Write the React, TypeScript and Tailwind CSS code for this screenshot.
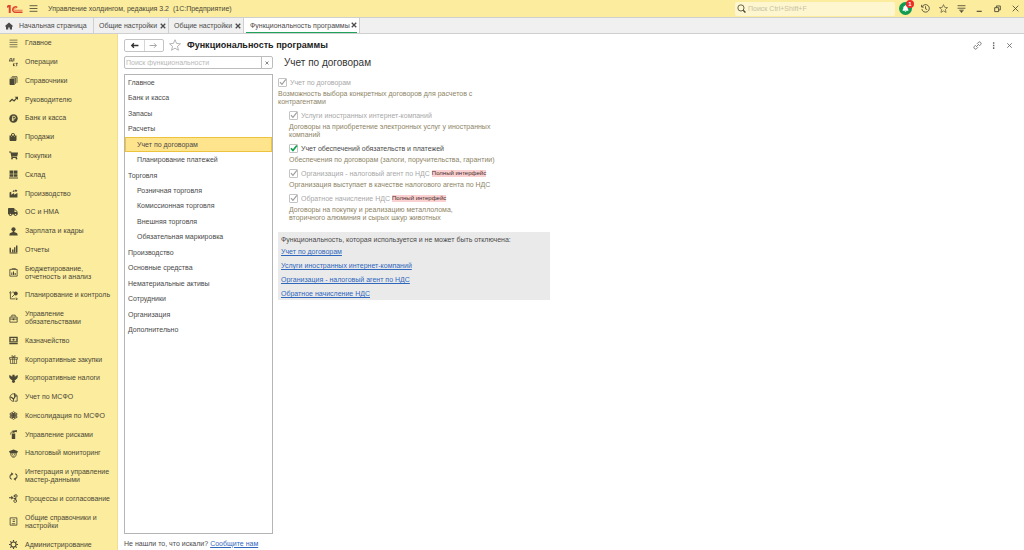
import type { ReactNode } from "react";
import clsx from "clsx";
import { FaBell, FaShoppingBag, FaShoppingCart, FaTruck } from "react-icons/fa";

function Svg({ children, className = "size-[9px]" }: { children: ReactNode; className?: string }) {
  return (
    <svg viewBox="0 0 16 16" fill="none" stroke="currentColor" strokeWidth="1.5" className={clsx("shrink-0", className)} aria-hidden="true">
      {children}
    </svg>
  );
}

const solid = { fill: "currentColor", stroke: "none" };

const sections: { label: string; icon: ReactNode }[] = [
  { label: "Главное", icon: <Svg><path d="M1 2h14M1 6h14M1 10h14M1 14h14" strokeWidth="1.2" /></Svg> },
  {
    label: "Операции",
    icon: (
      <Svg>
        <path d="M0 6.500V5h1l1-4h3v4h1v1.500M1 5h5M7 1.500h3M8.500 1.500V6M8 9.500v5M8 12l2.500-2.500M8 12l2.500 2.500M12 9.500h3.500M13.700 9.500v5" strokeWidth="1.5" />
      </Svg>
    ),
  },
  {
    label: "Справочники",
    icon: (
      <Svg>
        <path {...solid} d="M1 5h9v11H2l-1-1z" />
        <path d="M3 3.500h8.700V14M5 1.300h9.200V12" strokeWidth="1.500" />
      </Svg>
    ),
  },
  { label: "Руководителю", icon: <Svg><path d="M1 12l4.500-4.500 3.500 3L14 5" strokeWidth="2.200" /><path {...solid} d="M10 3h6v6z" /></Svg> },
  {
    label: "Банк и касса",
    icon: (
      <Svg>
        <circle cx="8" cy="8" r="7.500" {...solid} />
        <path d="M6.500 12.500V4h2.500a2.300 2.300 0 010 4.800H5M5 10.800h4" stroke="#fbec9e" />
      </Svg>
    ),
  },
  { label: "Продажи", icon: <FaShoppingBag className="size-2 shrink-0" /> },
  { label: "Покупки", icon: <FaShoppingCart className="size-[9px] shrink-0" /> },
  { label: "Склад", icon: <Svg><path {...solid} d="M1 1h6.500v5.500H1zM8.500 1H15v5.500H8.500zM1 7.500h6.500V12H1zM8.500 7.500H15V12H8.500zM0 13.200h16v1.800H0z" /></Svg> },
  {
    label: "Производство",
    icon: <Svg><path {...solid} d="M1 15V6l3-1v5l5-3v3l6-3v8z" /><path {...solid} d="M6 4l2-2 2 1 2-2 3 2-2 2-3-1-2 1.500z" /></Svg>,
  },
  { label: "ОС и НМА", icon: <FaTruck className="size-[10px] shrink-0" /> },
  { label: "Зарплата и кадры", icon: <Svg><circle cx="8" cy="4" r="3.700" {...solid} /><path {...solid} d="M6.500 6h3v3l5 2 1 4H.5l1-4 5-2z" /></Svg> },
  { label: "Отчеты", icon: <Svg><path {...solid} d="M1 5h2.500v8H1zM5.500 8H8v5H5.500zM9 4h2.300v9H9zM12.500 1H15v12h-2.500zM1 13.500h14V15H1z" /></Svg> },
  {
    label: "Бюджетирование,\nотчетность и анализ",
    icon: <Svg><path d="M1.500 2.500h13v12h-13zM5 .5h6v2" /><path d="M5 8v4.500M8 6v6.500M11 9v3.500" strokeWidth="1.800" /></Svg>,
  },
  {
    label: "Планирование и контроль",
    icon: <Svg><path d="M2.500 3v11h9M1 4l1.500-3L4 4M12 12l3 2-3 2M5 11l5-5M6 2h3" /><circle cx="12" cy="4.500" r="3.500" {...solid} /></Svg>,
  },
  { label: "Управление\nобязательствами", icon: <Svg><path d="M1.500 5.500h13v9h-13zM5 5V2h6v3M1.500 9h13" /><path {...solid} d="M6.500 8h3v3h-3z" /></Svg> },
  {
    label: "Казначейство",
    icon: <Svg><path d="M1.500 2.500h13v8h-13zM.5 13.500h15" strokeWidth="2" /><circle cx="8" cy="6.500" r="2" {...solid} /><path d="M3 4.500v4M13 4.500v4" /></Svg>,
  },
  {
    label: "Корпоративные закупки",
    icon: <Svg><path d="M1 4.500h14v3H1zM2.500 7.500v8h11v-8M6.500 4.500v11M9.500 4.500v11M8 4C5 4 4 1 5.500 1S8 4 8 4s1-3 2.500-3S11 4 8 4" strokeWidth="1.300" /></Svg>,
  },
  {
    label: "Корпоративные налоги",
    icon: <Svg><path {...solid} d="M0 2l4 1 1 2 1-1V1.500h4V4l1 1 1-2 4-1-1 5-3 3-2 1 1 3-3 2-3-2 1-3-2-1-3-3z" /></Svg>,
  },
  {
    label: "Учет по МСФО",
    icon: <Svg><path d="M6 2A6.500 6.500 0 005 14l3 1V9M6 1.500h5l3.500 3.500v9.500H10" /><path d="M2 7l3 1 3 3 3-5M10 1v4h4" strokeWidth="2" /></Svg>,
  },
  {
    label: "Консолидация по МСФО",
    icon: (
      <Svg>
        <circle cx="8" cy="8" r="2.500" {...solid} />
        <ellipse cx="8" cy="8" rx="3" ry="7" />
        <ellipse cx="8" cy="8" rx="3" ry="7" transform="rotate(60 8 8)" />
        <ellipse cx="8" cy="8" rx="3" ry="7" transform="rotate(120 8 8)" />
      </Svg>
    ),
  },
  { label: "Управление рисками", icon: <Svg><path {...solid} d="M5 6h6v10H5zM6 1h4v4H6zM9 1l5-1v4L9 3z" /><path d="M6 3C4 3 3 5 3 8" strokeWidth="1.600" /></Svg> },
  {
    label: "Налоговый мониторинг",
    icon: <Svg><path {...solid} d="M0 4l8-3 8 3-2 4H2z" /><path d="M3 8c0 9 10 9 10 0M5 9.500h2M9 9.500h2M6 12.500h4" /></Svg>,
  },
  {
    label: "Интеграция и управление\nмастер-данными",
    icon: <Svg><path d="M5 3.500C0 6 1 12 5 13M11 12.500c5-2.500 4-8.500 0-9.500" strokeWidth="1.800" /><path {...solid} d="M4 .5l4 3-4 3zM12 9.500v6l-4-3z" /></Svg>,
  },
  {
    label: "Процессы и согласование",
    icon: <Svg><path d="M0 6.500h5M8 3.500h5M8 8h4v3" strokeWidth="1.800" /><path {...solid} d="M4 3l4 3.500L4 10z" /><circle cx="12" cy="3.500" r="2.500" /><circle cx="11" cy="12.500" r="2.500" /></Svg>,
  },
  { label: "Общие справочники и\nнастройки", icon: <Svg><path d="M2 1.500h12v13H2z" /><path d="M6.500 5h4M6.500 8h4M5 12h6" /></Svg> },
  {
    label: "Администрирование",
    icon: <Svg><circle cx="8" cy="8" r="4.500" strokeWidth="2" /><path d="M8 0v3M8 13v3M0 8h3M13 8h3M2.300 2.300l2.200 2.200M11.500 11.500l2.200 2.200M2.300 13.700l2.200-2.200M11.500 4.500l2.200-2.200" strokeWidth="2" /></Svg>,
  },
];

const tree = [
  { label: "Главное" },
  { label: "Банк и касса" },
  { label: "Запасы" },
  { label: "Расчеты" },
  { label: "Учет по договорам", child: true, active: true },
  { label: "Планирование платежей", child: true },
  { label: "Торговля" },
  { label: "Розничная торговля", child: true },
  { label: "Комиссионная торговля", child: true },
  { label: "Внешняя торговля", child: true },
  { label: "Обязательная маркировка", child: true },
  { label: "Производство" },
  { label: "Основные средства" },
  { label: "Нематериальные активы" },
  { label: "Сотрудники" },
  { label: "Организация" },
  { label: "Дополнительно" },
];

const options = [
  { id: "contracts", label: "Учет по договорам", text: "Возможность выбора конкретных договоров для расчетов с\nконтрагентами", root: true },
  { id: "services", label: "Услуги иностранных интернет-компаний", text: "Договоры на приобретение электронных услуг у иностранных\nкомпаний" },
  { id: "collateral", label: "Учет обеспечений обязательств и платежей", text: "Обеспечения по договорам (залоги, поручительства, гарантии)", enabled: true },
  { id: "agent", label: "Организация - налоговый агент по НДС", text: "Организация выступает в качестве налогового агента по НДС", full: true },
  { id: "reverse", label: "Обратное начисление НДС", text: "Договоры на покупку и реализацию металлолома,\nвторичного алюминия и сырых шкур животных", full: true },
];

const usedLinks = [
  "Учет по договорам",
  "Услуги иностранных интернет-компаний",
  "Организация - налоговый агент по НДС",
  "Обратное начисление НДС",
];

function Cross({ className = "size-[6px]" }: { className?: string }) {
  return (
    <Svg className={className}>
      <path d="M2 2l12 12M14 2L2 14" strokeWidth="3.500" />
    </Svg>
  );
}

function Star({ className }: { className: string }) {
  return (
    <Svg className={className}>
      <path d="M8 1l2.100 4.900 5.200.5-4 3.400 1.300 5.200L8 12.200 3.400 15l1.300-5.200-4-3.400 5.200-.5z" strokeWidth="1.100" />
    </Svg>
  );
}

function TitleBar() {
  return (
    <header className="flex h-[17px] shrink-0 items-center bg-[#fbec9e] pl-[7px] pr-1 text-[#4c4836]">
      <svg viewBox="0 0 32 20" className="h-[10px] w-4" fill="none" stroke="#e2452f" aria-label="1С" role="img">
        <path d="M0 6.500l4-3.500M5.500 2v16" strokeWidth="4" />
        <path d="M20.500 7a5.500 5.500 0 10-5 9.500H31" strokeWidth="3" />
        <path d="M17.500 9a2.300 2.300 0 10-2 3.500H31" strokeWidth="1.500" />
      </svg>
      <button aria-label="Меню" className="ml-[6px]"><Svg><path d="M1 3h14M1 8h14M1 13h14" /></Svg></button>
      <span className="ml-[10px] whitespace-pre">Управление холдингом, редакция 3.2  (1С:Предприятие)</span>
      <label className="ml-auto flex h-[14px] w-40 items-center gap-[2px] rounded-xs bg-[#fdf6cf] px-[2px]">
        <Svg><circle cx="7" cy="7" r="5.500" /><path d="M11 11l4 4" strokeWidth="2.500" /></Svg>
        <input aria-label="Поиск" placeholder="Поиск Ctrl+Shift+F" className="min-w-0 flex-1 outline-none placeholder:text-[#c9c2a2]" />
      </label>
      <div className="ml-1 flex items-center gap-[9px]">
        <button aria-label="Уведомления" className="relative flex size-[13px] items-center justify-center rounded-full bg-[#109a52] text-white">
          <FaBell className="size-[7px]" />
          <span className="absolute -right-[2px] -top-[2px] flex size-2 items-center justify-center rounded-full bg-[#ee2b2b] text-[6px] font-bold">1</span>
        </button>
        <button aria-label="История"><Svg><path d="M2 5a6.700 6.700 0 11-.5 4M1 1.500V5.500h4M8 4v4.500l3 1.500" /></Svg></button>
        <button aria-label="Избранное"><Star className="size-[9px]" /></button>
        <button aria-label="Настройки"><Svg><path d="M1 3h14M1 7.500h14M4 11h8" /><path {...solid} d="M5 12h6l-3 4z" /></Svg></button>
        <button aria-label="Свернуть"><Svg><path d="M3 13h9" strokeWidth="2" /></Svg></button>
        <button aria-label="Восстановить"><Svg><path d="M3 6.500h7v7H3zM6 6V3.500h7v7h-3" strokeWidth="1.600" /></Svg></button>
        <button aria-label="Закрыть"><Svg><path d="M3 3l10 10M13 3L3 13" /></Svg></button>
      </div>
    </header>
  );
}

function Tabs() {
  return (
    <div className="flex h-[17px] shrink-0 border-y border-[#cfcfcf] bg-[#f0f0f0] text-[#4a4a4a]">
      <button className="flex w-[94px] items-center gap-[6px] border-r border-[#cfcfcf] pl-[5px]">
        <Svg className="size-2"><path {...solid} d="M8 1l8 7-1.500 1.500L14 9v6H9.500v-4h-3v4H2V9l-.5.5L0 8z" /></Svg>
        Начальная страница
      </button>
      {["Общие настройки", "Общие настройки"].map((tab, i) => (
        <div key={i} className="flex w-[75px] items-center justify-between border-r border-[#cfcfcf] pl-[5px] pr-[2px]">
          <button>{tab}</button>
          <button aria-label="Закрыть вкладку"><Cross /></button>
        </div>
      ))}
      <div className="flex w-[116px] border-r border-[#cfcfcf] bg-white px-[2px]">
        <div className="flex flex-1 items-center justify-between border-b border-[#1da35b] pl-1">
          <button>Функциональность программы</button>
          <button aria-label="Закрыть вкладку"><Cross /></button>
        </div>
      </div>
    </div>
  );
}

function Sidebar() {
  return (
    <nav className="w-[118px] shrink-0 border-r border-[#efdf90] bg-[#fbec9e] text-[#4c4836]">
      <ul className="flex min-h-[520px] flex-col">
        {sections.map(({ label, icon }) => (
          <li key={label} className="flex flex-auto">
            <a href="#" className="flex flex-1 items-center gap-[7px] whitespace-pre pl-2 leading-[8px]">
              <span className="flex h-2 w-[10px] items-center justify-center">{icon}</span>
              {label}
            </a>
          </li>
        ))}
      </ul>
    </nav>
  );
}

function Navigator() {
  return (
    <aside className="flex w-[149px] shrink-0 flex-col">
      <div className="flex h-[13px] shrink-0 rounded-xs border border-[#bdbdbd]">
        <input aria-label="Поиск функциональности" placeholder="Поиск функциональности" className="min-w-0 flex-1 px-[1px] outline-none placeholder:text-[#b8b8b8]" />
        <button aria-label="Очистить" className="flex w-[11px] items-center justify-center border-l border-[#bdbdbd] text-[#777]">
          <Cross className="size-1" />
        </button>
      </div>
      <div className="mt-[5px] flex-1 border border-[#b5b5b5]">
        <ul className="flex min-h-[263px] flex-col">
          {tree.map(({ label, child, active }) => (
            <li key={label} className="flex flex-auto">
              <button
                className={clsx(
                  "flex-1 border text-left leading-[8px]",
                  child ? "pl-[11px]" : "pl-[2px]",
                  active ? "border-[#edc23c] bg-[#ffe48e]" : "border-transparent",
                )}
              >
                {label}
              </button>
            </li>
          ))}
        </ul>
      </div>
      <p className="flex h-4 shrink-0 items-center gap-[2px] pt-[2px]">
        Не нашли то, что искали?
        <a href="#" className="text-[#2f67bd] underline">Сообщите нам</a>
      </p>
    </aside>
  );
}

function Option({ id, label, text, root, enabled, full }: (typeof options)[number]) {
  return (
    <div className={clsx("mb-[5px]", !root && "ml-[11px]")}>
      <div className="flex h-[9px] items-center">
        <span className="relative flex size-[9px]">
          <input
            id={id}
            type="checkbox"
            defaultChecked
            disabled={!enabled}
            className="size-[9px] appearance-none rounded-[1px] border border-[#c4c4c4] bg-white"
          />
          <Svg className={clsx("pointer-events-none absolute inset-0 size-[9px]", enabled ? "text-[#0ca04f]" : "text-[#9d9d9d]")}>
            <path d="M3.500 7.500l3.500 4 7-9" strokeWidth={enabled ? 3 : 2} />
          </Svg>
        </span>
        <label htmlFor={id} className={clsx("ml-[3px]", enabled ? "text-[#4a4a4a]" : "text-[#a8a8a8]")}>{label}</label>
        {full && <span className="ml-[2px] bg-[#fbd0d0] text-[6px] leading-[7px] text-[#3f2d2d]">Полный интерфейс</span>}
      </div>
      <p className="mt-[3px] whitespace-pre leading-[8px] text-[#8d8466]">{text}</p>
    </div>
  );
}

export default function App() {
  return (
    <div className="flex h-screen flex-col overflow-hidden bg-white font-['Liberation_Sans',Arial,sans-serif] text-[7px] leading-[9px] text-[#4a4a4a]">
      <TitleBar />
      <Tabs />
      <div className="flex min-h-0 flex-1">
        <Sidebar />
        <main className="flex min-w-0 flex-1 flex-col pl-[6px]">
          <div className="flex h-[22px] shrink-0 items-center pr-[10px]">
            <div className="flex h-[13px] w-10 rounded-xs border border-[#c4c4c4]">
              <button aria-label="Назад" className="flex flex-1 items-center justify-center border-r border-[#d6d6d6] text-[#333]">
                <Svg><path d="M15 8H3M7 4L3 8l4 4" strokeWidth="2.300" /></Svg>
              </button>
              <button aria-label="Вперед" className="flex flex-1 items-center justify-center text-[#999]">
                <Svg><path d="M1 8h12M9 4l4 4-4 4" /></Svg>
              </button>
            </div>
            <button aria-label="В избранное" className="ml-[5px] text-[#a5a5a5]"><Star className="size-3" /></button>
            <h1 className="ml-[6px] text-[9px] font-bold text-[#222]">Функциональность программы</h1>
            <div className="ml-auto flex items-center gap-[7px] text-[#666]">
              <button aria-label="Ссылка">
                <Svg><path d="M7 5l2.500-2.500a2.800 2.800 0 014 4L11 9M9 11l-2.500 2.500a2.800 2.800 0 01-4-4L5 7M5.500 10.500l5-5" /></Svg>
              </button>
              <button aria-label="Еще"><Svg><path {...solid} d="M7 2h2.500v3H7zM7 6.500h2.500v3H7zM7 11h2.500v3H7z" /></Svg></button>
              <button aria-label="Закрыть форму"><Svg><path d="M4 4l8 8M12 4l-8 8" /></Svg></button>
            </div>
          </div>
          <div className="flex min-h-0 flex-1">
            <Navigator />
            <section className="min-w-0 flex-1 pl-[5px]">
              <h2 className="pl-[6px] text-[10px] leading-[13px] text-[#333]">Учет по договорам</h2>
              <div className="pt-[9px]">
                {options.map((option) => (
                  <Option key={option.id} {...option} />
                ))}
              </div>
              <div className="mt-[10px] w-[272px] max-w-full bg-[#eaeaea] px-[3px] pb-[2px] pt-[3px]">
                <p>Функциональность, которая используется и не может быть отключена:</p>
                <ul className="mt-[3px] flex flex-col gap-[5px]">
                  {usedLinks.map((link) => (
                    <li key={link}>
                      <a href="#" className="text-[#2f67bd] underline">{link}</a>
                    </li>
                  ))}
                </ul>
              </div>
            </section>
          </div>
        </main>
      </div>
    </div>
  );
}
